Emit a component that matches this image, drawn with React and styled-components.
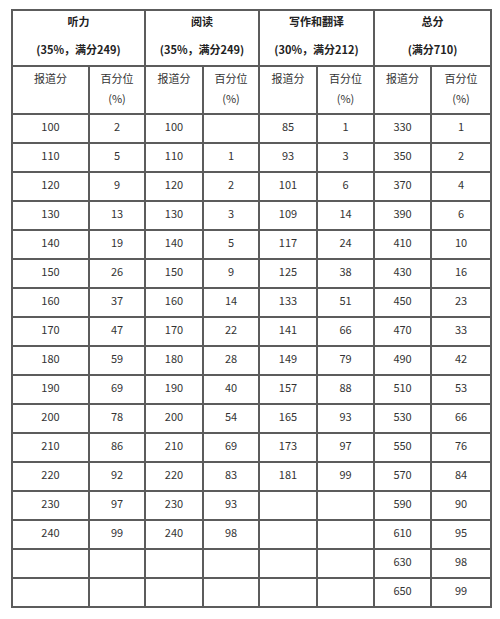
import React from 'react';
import styled, { createGlobalStyle } from 'styled-components';

const GlobalStyle = createGlobalStyle`
	html, body {
		margin: 0;
		padding: 0;
		background: #fff;
	}
	body {
		font-family: "Noto Sans CJK SC", "Noto Sans", sans-serif;
		color: #333;
	}
`;

const Page = styled.div`
	padding: 9px 0 0 11px;
`;

const Table = styled.table`
	border-collapse: collapse;
	table-layout: fixed;
	width: 479px;
	font-size: 11px;
	line-height: 20px;
	text-align: center;
	td, th {
		border: 2px solid #5c5c5c;
		padding: 0;
		vertical-align: top;
	}
`;

const GroupHead = styled.th`
	height: 54px;
	font-weight: bold;
	color: #222;
`;

const HeadLine = styled.div`
	height: 20px;
	margin-bottom: ${p => (p.$gap ? '8px' : '0')};
`;

const SubHead = styled.td`
	height: 45px;
	padding-top: 1px !important;
`;

const Cell = styled.td`
	height: 26px;
	padding-top: 1px !important;
`;

const range = (start, step, n) => Array.from({ length: n }, (_, i) => String(start + step * i));

const columns = [
	{ title: '听力', sub: '(35%，满分249)', scores: range(100, 10, 15), pct: ['2', '5', '9', '13', '19', '26', '37', '47', '59', '69', '78', '86', '92', '97', '99'] },
	{ title: '阅读', sub: '(35%，满分249)', scores: range(100, 10, 15), pct: ['', '1', '2', '3', '5', '9', '14', '22', '28', '40', '54', '69', '83', '93', '98'] },
	{ title: '写作和翻译', sub: '(30%，满分212)', scores: range(85, 8, 13), pct: ['1', '3', '6', '14', '24', '38', '51', '66', '79', '88', '93', '97', '99'] },
	{ title: '总分', sub: '(满分710)', scores: range(330, 20, 17), pct: ['1', '2', '4', '6', '10', '16', '23', '33', '42', '53', '66', '76', '84', '90', '95', '98', '99'] },
];

const widths = [77, 56, 58, 56, 58, 57, 57, 60];

const App = () => {
	const rows = Array.from({ length: 17 }, (_, r) => r);
	return (
		<Page>
			<GlobalStyle />
			<Table>
				<colgroup>
					{widths.map((w, i) => <col key={i} style={{ width: w }} />)}
				</colgroup>
				<thead>
					<tr>
						{columns.map(c => (
							<GroupHead key={c.title} colSpan={2}>
								<HeadLine $gap>{c.title}</HeadLine>
								<HeadLine>{c.sub}</HeadLine>
							</GroupHead>
						))}
					</tr>
					<tr>
						{columns.map(c => (
							<React.Fragment key={c.title}>
								<SubHead>报道分</SubHead>
								<SubHead>百分位<br />(%)</SubHead>
							</React.Fragment>
						))}
					</tr>
				</thead>
				<tbody>
					{rows.map(r => (
						<tr key={r}>
							{columns.map(c => (
								<React.Fragment key={c.title}>
									<Cell>{c.scores[r] || ''}</Cell>
									<Cell>{c.pct[r] || ''}</Cell>
								</React.Fragment>
							))}
						</tr>
					))}
				</tbody>
			</Table>
		</Page>
	);
};

export default App;
